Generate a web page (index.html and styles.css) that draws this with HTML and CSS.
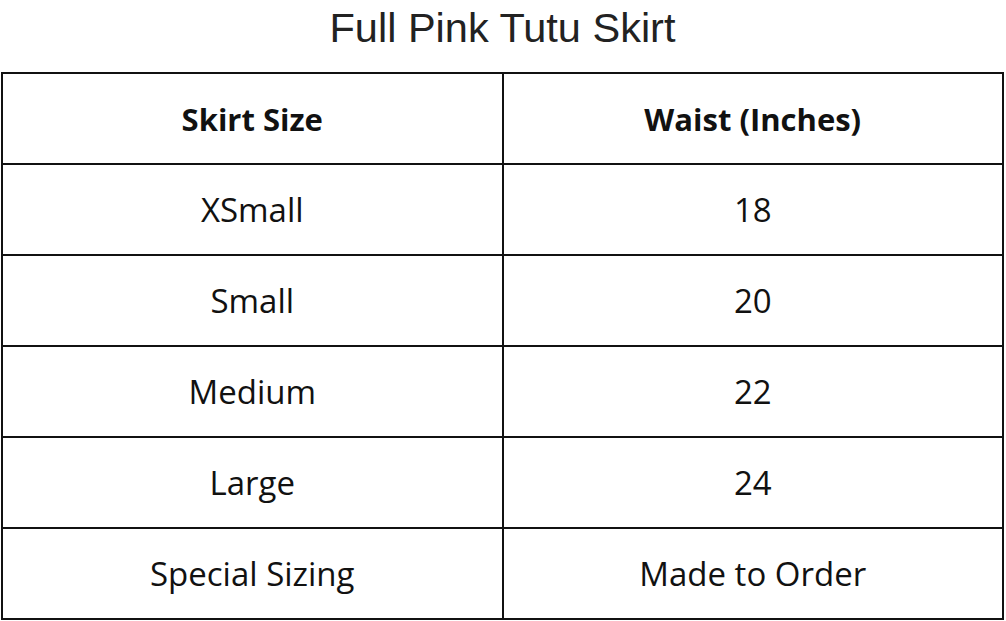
FILE: index.html
```html
<!DOCTYPE html>
<html>
<head>
<meta charset="utf-8">
<link rel="stylesheet" href="styles.css">
</head>
<body>
<div class="sheet">
  <h1 class="title">Full Pink Tutu Skirt</h1>
  <table class="chart">
    <thead>
      <tr><th>Skirt Size</th><th>Waist (Inches)</th></tr>
    </thead>
    <tbody>
      <tr><td>XSmall</td><td>18</td></tr>
      <tr><td>Small</td><td>20</td></tr>
      <tr><td>Medium</td><td>22</td></tr>
      <tr><td>Large</td><td>24</td></tr>
      <tr><td>Special Sizing</td><td>Made to Order</td></tr>
    </tbody>
  </table>
</div>
</body>
</html>
```
FILE: styles.css
```css
html, body {
  margin: 0;
  padding: 0;
  background: #ffffff;
}
.sheet {
  width: 1003px;
  margin-left: 1px;
}
.title {
  margin: 0;
  height: 72px;
  padding-top: 4px;
  box-sizing: border-box;
  text-align: center;
  font-family: "Liberation Sans", Arial, sans-serif;
  font-weight: normal;
  font-size: 41.5px;
  line-height: 47px;
  color: #222222;
}
.chart {
  width: 1003px;
  border-collapse: collapse;
  table-layout: fixed;
  font-family: "Open Sans", sans-serif;
  font-size: 33px;
  color: #111111;
}
.chart th, .chart td {
  border: 2px solid #111111;
  height: 89px;
  padding: 0;
  text-align: center;
  vertical-align: middle;
}
.chart th {
  font-weight: 700;
  font-size: 31px;
}
.chart td {
  font-weight: 400;
}
```
